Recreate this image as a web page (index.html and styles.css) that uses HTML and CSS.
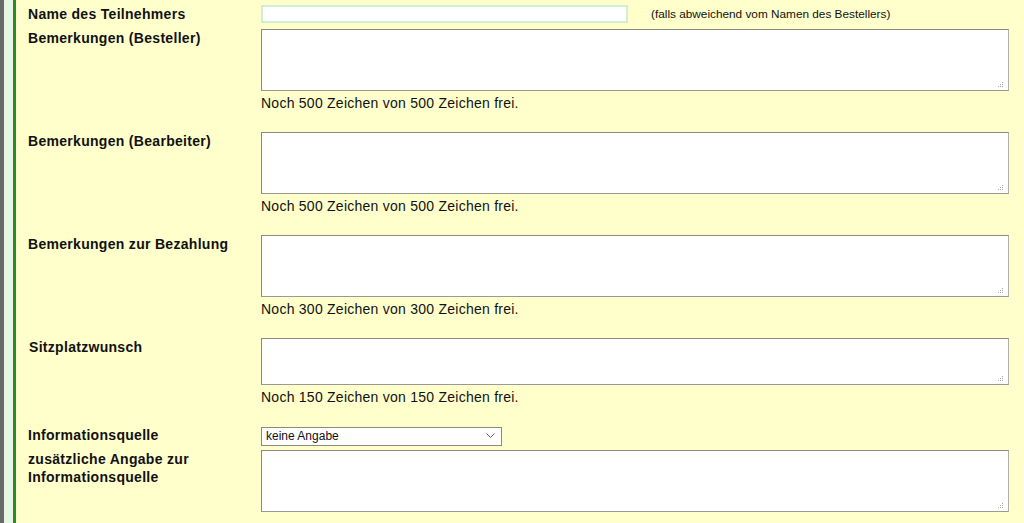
FILE: index.html
```html
<!DOCTYPE html>
<html lang="de">
<head>
<meta charset="utf-8">
<title>Bestellung</title>
<link rel="stylesheet" href="styles.css">
</head>
<body>
<div class="page">
  <div class="strip-gray"></div>
  <div class="strip-mint"></div>
  <div class="strip-green"></div>
  <form class="form">
    <div class="row row-name">
      <label class="label">Name des Teilnehmers</label>
      <div class="field field-inline">
        <input class="text-input" type="text">
        <span class="hint">(falls abweichend vom Namen des Bestellers)</span>
      </div>
    </div>
    <div class="row row-block">
      <label class="label">Bemerkungen (Besteller)</label>
      <div class="field">
        <div class="area-wrap">
          <textarea class="area"></textarea>
          <svg class="grip" width="6" height="6" viewBox="0 0 6 6"><g fill="#a8a8a0"><rect x="4" y="0" width="1" height="1"/><rect x="2" y="2" width="1" height="1"/><rect x="4" y="2" width="1" height="1"/><rect x="0" y="4" width="1" height="1"/><rect x="2" y="4" width="1" height="1"/><rect x="4" y="4" width="1" height="1"/></g></svg>
        </div>
        <div class="note">Noch 500 Zeichen von 500 Zeichen frei.</div>
      </div>
    </div>
    <div class="row row-block">
      <label class="label">Bemerkungen (Bearbeiter)</label>
      <div class="field">
        <div class="area-wrap">
          <textarea class="area"></textarea>
          <svg class="grip" width="6" height="6" viewBox="0 0 6 6"><g fill="#a8a8a0"><rect x="4" y="0" width="1" height="1"/><rect x="2" y="2" width="1" height="1"/><rect x="4" y="2" width="1" height="1"/><rect x="0" y="4" width="1" height="1"/><rect x="2" y="4" width="1" height="1"/><rect x="4" y="4" width="1" height="1"/></g></svg>
        </div>
        <div class="note">Noch 500 Zeichen von 500 Zeichen frei.</div>
      </div>
    </div>
    <div class="row row-block">
      <label class="label">Bemerkungen zur Bezahlung</label>
      <div class="field">
        <div class="area-wrap">
          <textarea class="area"></textarea>
          <svg class="grip" width="6" height="6" viewBox="0 0 6 6"><g fill="#a8a8a0"><rect x="4" y="0" width="1" height="1"/><rect x="2" y="2" width="1" height="1"/><rect x="4" y="2" width="1" height="1"/><rect x="0" y="4" width="1" height="1"/><rect x="2" y="4" width="1" height="1"/><rect x="4" y="4" width="1" height="1"/></g></svg>
        </div>
        <div class="note">Noch 300 Zeichen von 300 Zeichen frei.</div>
      </div>
    </div>
    <div class="row row-block">
      <label class="label label-indent">Sitzplatzwunsch</label>
      <div class="field">
        <div class="area-wrap">
          <textarea class="area area-short"></textarea>
          <svg class="grip" width="6" height="6" viewBox="0 0 6 6"><g fill="#a8a8a0"><rect x="4" y="0" width="1" height="1"/><rect x="2" y="2" width="1" height="1"/><rect x="4" y="2" width="1" height="1"/><rect x="0" y="4" width="1" height="1"/><rect x="2" y="4" width="1" height="1"/><rect x="4" y="4" width="1" height="1"/></g></svg>
        </div>
        <div class="note">Noch 150 Zeichen von 150 Zeichen frei.</div>
      </div>
    </div>
    <div class="row row-select">
      <label class="label">Informationsquelle</label>
      <div class="field">
        <div class="select-wrap">
          <select class="select">
            <option>keine Angabe</option>
          </select>
          <svg class="chevron" width="9" height="5" viewBox="0 0 9 5"><path d="M0.5 0.5 L4.5 4.5 L8.5 0.5" fill="none" stroke="#666" stroke-width="1"/></svg>
        </div>
      </div>
    </div>
    <div class="row">
      <label class="label">zusätzliche Angabe zur Informationsquelle</label>
      <div class="field">
        <div class="area-wrap">
          <textarea class="area"></textarea>
          <svg class="grip" width="6" height="6" viewBox="0 0 6 6"><g fill="#a8a8a0"><rect x="4" y="0" width="1" height="1"/><rect x="2" y="2" width="1" height="1"/><rect x="4" y="2" width="1" height="1"/><rect x="0" y="4" width="1" height="1"/><rect x="2" y="4" width="1" height="1"/><rect x="4" y="4" width="1" height="1"/></g></svg>
        </div>
      </div>
    </div>
  </form>
</div>
</body>
</html>
```

FILE: styles.css
```css
html, body {
  margin: 0;
  padding: 0;
  height: 100%;
  background: #ffffcc;
}
body {
  font-family: "Liberation Sans", Arial, sans-serif;
  color: #000;
  overflow: hidden;
}
.page {
  display: flex;
  min-height: 523px;
  background: #ffffcc;
}
.strip-gray {
  width: 4px;
  background: #6a6a6a;
  flex: none;
}
.strip-mint {
  width: 9px;
  background: #e4f7e4;
  flex: none;
}
.strip-green {
  width: 3px;
  background: #2a8a2a;
  flex: none;
}
.form {
  flex: 1;
  padding: 5px 0 0 12px;
}
.row {
  display: grid;
  grid-template-columns: 233px 748px;
  align-items: start;
}
.row-name {
  margin-bottom: 6px;
}
.row-block {
  margin-bottom: 20px;
}
.row-select {
  margin-bottom: 5px;
}
.label {
  font-size: 14px;
  font-weight: bold;
  line-height: 18px;
  letter-spacing: 0.3px;
  padding-right: 4px;
  color: #111;
}
.label-indent {
  padding-left: 1px;
}
.field-inline {
  display: flex;
  align-items: center;
}
.text-input {
  box-sizing: border-box;
  width: 367px;
  height: 18px;
  margin: 0;
  padding: 0 2px;
  border: 2px solid #d2eed2;
  background: #fff;
  outline: none;
}
.hint {
  margin-left: 23px;
  font-size: 11.8px;
  line-height: 16px;
  color: #111;
}
.area-wrap {
  position: relative;
  width: 748px;
}
.area {
  display: block;
  box-sizing: border-box;
  width: 748px;
  height: 62px;
  margin: 0;
  padding: 2px;
  border: 1px solid #9a9a94;
  border-top-color: #8a8a80;
  border-left-color: #8a8a80;
  border-right-color: #b0b0a8;
  background: #fff;
  font-family: "Liberation Mono", monospace;
  font-size: 13px;
  resize: none;
}
.area-short {
  height: 47px;
}
.grip {
  position: absolute;
  right: 5px;
  bottom: 3px;
  pointer-events: none;
}
.note {
  margin-top: 3px;
  font-size: 14px;
  line-height: 18px;
  letter-spacing: 0.25px;
  color: #111;
}
.select-wrap {
  position: relative;
  width: 241px;
  height: 19px;
}
.select {
  appearance: none;
  -webkit-appearance: none;
  box-sizing: border-box;
  width: 241px;
  height: 19px;
  margin: 0;
  padding: 0 0 0 4px;
  border: 1px solid #8a8a80;
  border-radius: 0;
  background: #fff;
  font-family: "Liberation Sans", Arial, sans-serif;
  font-size: 12px;
  color: #111;
}
.chevron {
  position: absolute;
  right: 7px;
  top: 7px;
  pointer-events: none;
}
```
